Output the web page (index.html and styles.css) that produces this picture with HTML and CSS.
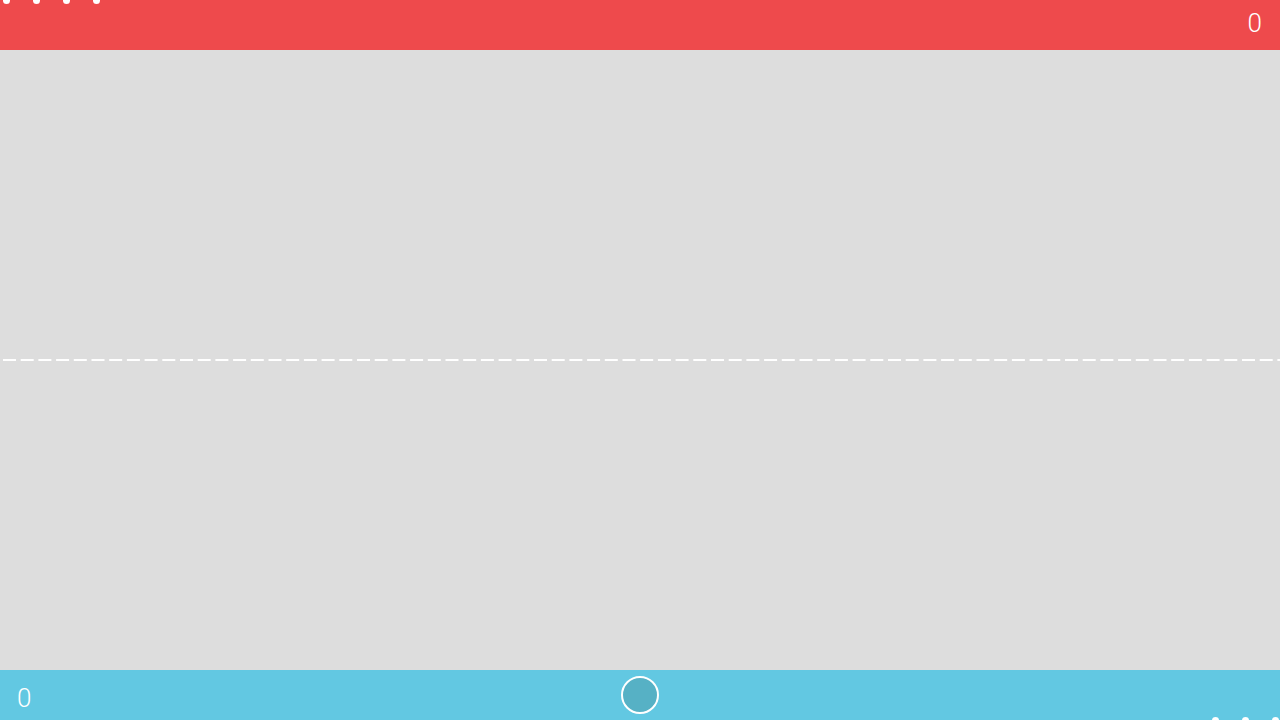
FILE: index.html
```html
<!DOCTYPE html>
<html>
<head>
<meta charset="utf-8">
<link rel="stylesheet" href="styles.css">
</head>
<body>
<div class="app">
  <header class="bar bar-top">
    <div class="dots dots-top">
      <span class="dot"></span><span class="dot"></span><span class="dot"></span><span class="dot"></span>
    </div>
    <span class="score score-top">0</span>
  </header>
  <main class="field">
    <svg class="midline" width="1280" height="2" viewBox="0 0 1280 2">
      <line x1="3" y1="1" x2="1280" y2="1" stroke="#ffffff" stroke-width="2" stroke-dasharray="13 4.7"/>
    </svg>
  </main>
  <footer class="bar bar-bottom">
    <span class="score score-bottom">0</span>
    <div class="ball"></div>
    <div class="dots dots-bottom">
      <span class="dot"></span><span class="dot"></span><span class="dot"></span>
    </div>
  </footer>
</div>
</body>
</html>
```
FILE: styles.css
```css
html, body {
  margin: 0;
  padding: 0;
  width: 1280px;
  height: 720px;
  overflow: hidden;
  background: #dddddd;
  font-family: Roboto, "Liberation Sans", sans-serif;
}
.app {
  display: flex;
  flex-direction: column;
  width: 1280px;
  height: 720px;
}
.bar {
  height: 50px;
  flex: 0 0 50px;
  position: relative;
  display: flex;
  align-items: center;
  box-sizing: border-box;
}
.bar-top {
  background: #ee4a4c;
  justify-content: flex-end;
  padding-right: 18px;
}
.bar-bottom {
  background: #62c8e2;
  padding-left: 17px;
}
.score {
  color: #ffffff;
  font-size: 26px;
  font-weight: 300;
  line-height: 1;
}
.score-top {
  margin-top: -4px;
}
.score-bottom {
  margin-top: 5px;
}
.field {
  flex: 1;
  display: flex;
  align-items: center;
}
.midline {
  display: block;
  margin-top: -1px;
}
.ball {
  position: absolute;
  left: 621px;
  top: 6px;
  width: 34px;
  height: 34px;
  border: 2px solid #ffffff;
  border-radius: 50%;
  background: #56b1c5;
}
.dots {
  position: absolute;
  display: flex;
  gap: 23px;
}
.dot {
  width: 7px;
  height: 7px;
  border-radius: 50%;
  background: #ffffff;
}
.dots-top {
  left: 3px;
  top: -3px;
}
.dots-bottom {
  left: 1212px;
  bottom: -4px;
}
```
